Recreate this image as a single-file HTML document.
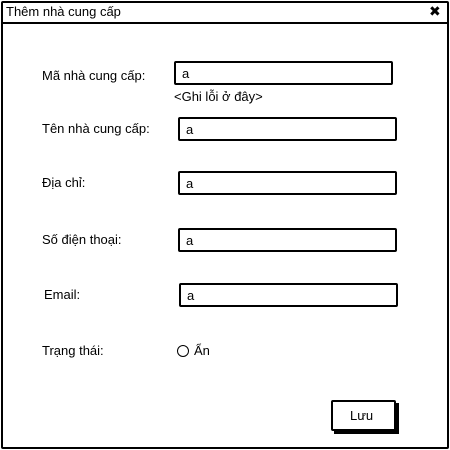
<!DOCTYPE html>
<html><head><meta charset="utf-8"><style>
body{margin:0;width:450px;height:450px;background:#fff;font-family:"Liberation Sans","DejaVu Sans",sans-serif;font-size:13px;color:#000;position:relative;overflow:hidden}
.a{position:absolute}
.box{position:absolute;border:2px solid #000;border-radius:2px;box-sizing:border-box;background:#fff}
.box span{position:absolute;left:6px;top:3px;font-size:13px}
.lbl{position:absolute;line-height:15px}
</style></head><body>
<div class="box" style="left:1px;top:1px;width:448px;height:448px;border-width:2px"></div>
<div class="a" style="left:2px;top:22px;width:446px;height:2px;background:#000"></div>
<div class="lbl" style="left:6px;top:4px;font-size:13px">Thêm nhà cung cấp</div>
<div class="lbl" style="left:429px;top:4px;font-size:14px;font-weight:bold">✖</div>

<div class="lbl" style="left:42px;top:68px">Mã nhà cung cấp:</div>
<div class="box" style="left:174px;top:61px;width:219px;height:24px"><span>a</span></div>
<div class="lbl" style="left:174px;top:89px">&lt;Ghi lỗi ở đây&gt;</div>

<div class="lbl" style="left:42px;top:121px">Tên nhà cung cấp:</div>
<div class="box" style="left:178px;top:117px;width:219px;height:24px"><span>a</span></div>

<div class="lbl" style="left:42px;top:175px">Địa chỉ:</div>
<div class="box" style="left:178px;top:171px;width:219px;height:24px"><span>a</span></div>

<div class="lbl" style="left:42px;top:232px">Số điện thoại:</div>
<div class="box" style="left:178px;top:228px;width:219px;height:24px"><span>a</span></div>

<div class="lbl" style="left:44px;top:287px">Email:</div>
<div class="box" style="left:179px;top:283px;width:219px;height:24px"><span>a</span></div>

<div class="lbl" style="left:42px;top:343px">Trạng thái:</div>
<div class="a" style="left:177px;top:345px;width:10px;height:10px;border:1px solid #000;border-radius:50%"></div>
<div class="lbl" style="left:194px;top:343px;font-size:13px">Ẩn</div>

<div class="a" style="left:334px;top:403px;width:65px;height:31px;background:#000"></div>
<div class="box" style="left:331px;top:400px;width:65px;height:31px"></div>
<div class="lbl" style="left:350px;top:408px">Lưu</div>
</body></html>
